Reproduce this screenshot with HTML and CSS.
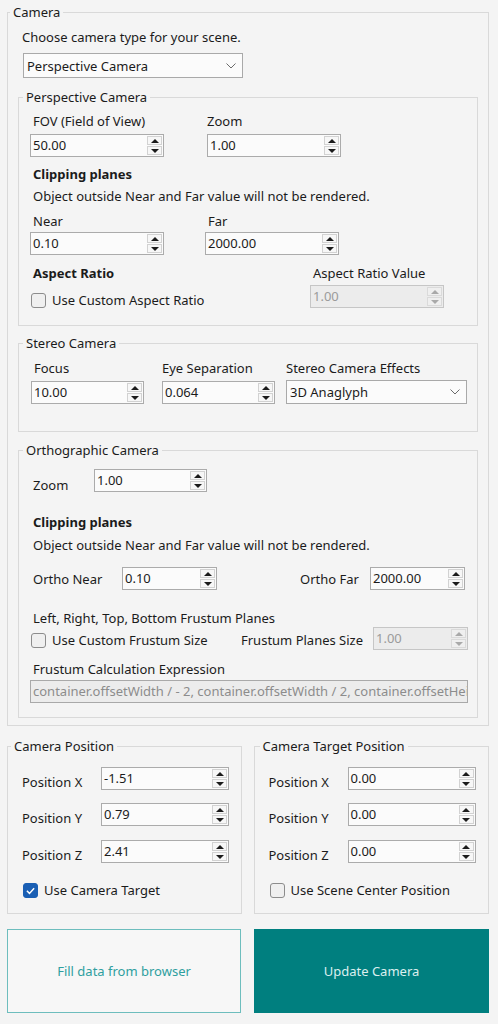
FILE: index.html
```html
<!DOCTYPE html>
<html lang="en">
<head>
    <meta charset="UTF-8">
    <meta name="viewport" content="width=device-width, initial-scale=1.0">
    <title>Camera Settings</title>
    <link rel="stylesheet" href="styles.css">
</head>
<body>
    <div class="page">
        <fieldset class="group camera">
            <legend>Camera</legend>
            <p class="hint">Choose camera type for your scene.</p>
            <div class="select type-select">
                <span>Perspective Camera</span>
                <svg class="chevron" viewBox="0 0 10 6"><polyline points="0.5,0.5 5,5 9.5,0.5"/></svg>
            </div>

            <!-- perspective settings -->
            <fieldset class="group sub perspective">
                <legend>Perspective Camera</legend>
                <div class="row top-row">
                    <div class="field fov">
                        <label>FOV (Field of View)</label>
                        <div class="spin lg"><span class="value">50.00</span><span class="arrows"><span class="arrow up"></span><span class="arrow down"></span></span></div>
                    </div>
                    <div class="field">
                        <label class="tight">Zoom</label>
                        <div class="spin lg"><span class="value">1.00</span><span class="arrows"><span class="arrow up"></span><span class="arrow down"></span></span></div>
                    </div>
                </div>
                <h4 class="title clip-title">Clipping planes</h4>
                <p class="note">Object outside Near and Far value will not be rendered.</p>
                <div class="row near-row">
                    <div class="field near">
                        <label>Near</label>
                        <div class="spin lg"><span class="value">0.10</span><span class="arrows"><span class="arrow up"></span><span class="arrow down"></span></span></div>
                    </div>
                    <div class="field">
                        <label>Far</label>
                        <div class="spin lg"><span class="value">2000.00</span><span class="arrows"><span class="arrow up"></span><span class="arrow down"></span></span></div>
                    </div>
                </div>
                <div class="row aspect-row">
                    <div class="aspect-left">
                        <h4 class="title">Aspect Ratio</h4>
                        <label class="check aspect-check"><span class="box"></span>Use Custom Aspect Ratio</label>
                    </div>
                    <div class="field">
                        <label>Aspect Ratio Value</label>
                        <div class="spin lg disabled"><span class="value">1.00</span><span class="arrows"><span class="arrow up"></span><span class="arrow down"></span></span></div>
                    </div>
                </div>
            </fieldset>

            <!-- stereo settings -->
            <fieldset class="group sub stereo">
                <legend>Stereo Camera</legend>
                <div class="row stereo-row">
                    <div class="field focus">
                        <label>Focus</label>
                        <div class="spin md"><span class="value">10.00</span><span class="arrows"><span class="arrow up"></span><span class="arrow down"></span></span></div>
                    </div>
                    <div class="field eye">
                        <label class="tight">Eye Separation</label>
                        <div class="spin md"><span class="value">0.064</span><span class="arrows"><span class="arrow up"></span><span class="arrow down"></span></span></div>
                    </div>
                    <div class="field">
                        <label class="tight">Stereo Camera Effects</label>
                        <div class="select effect-select">
                            <span>3D Anaglyph</span>
                            <svg class="chevron" viewBox="0 0 10 6"><polyline points="0.5,0.5 5,5 9.5,0.5"/></svg>
                        </div>
                    </div>
                </div>
            </fieldset>

            <!-- orthographic settings -->
            <fieldset class="group sub ortho">
                <legend>Orthographic Camera</legend>
                <div class="row ortho-zoom">
                    <label class="inline zoom-label">Zoom</label>
                    <div class="spin md"><span class="value">1.00</span><span class="arrows"><span class="arrow up"></span><span class="arrow down"></span></span></div>
                </div>
                <h4 class="title ortho-clip">Clipping planes</h4>
                <p class="note ortho-note">Object outside Near and Far value will not be rendered.</p>
                <div class="row ortho-planes">
                    <label class="inline near-label">Ortho Near</label>
                    <div class="spin sm"><span class="value">0.10</span><span class="arrows"><span class="arrow up"></span><span class="arrow down"></span></span></div>
                    <label class="inline far-label">Ortho Far</label>
                    <div class="spin sm"><span class="value">2000.00</span><span class="arrows"><span class="arrow up"></span><span class="arrow down"></span></span></div>
                </div>
                <p class="note frustum-note">Left, Right, Top, Bottom Frustum Planes</p>
                <div class="row frustum-row">
                    <label class="check frustum-check"><span class="box"></span>Use Custom Frustum Size</label>
                    <label class="inline size-label">Frustum Planes Size</label>
                    <div class="spin sm disabled"><span class="value">1.00</span><span class="arrows"><span class="arrow up"></span><span class="arrow down"></span></span></div>
                </div>
                <p class="note expr-note">Frustum Calculation Expression</p>
                <div class="text-input disabled">container.offsetWidth / - 2, container.offsetWidth / 2, container.offsetHeight / 2, container.offsetHeight / - 2</div>
            </fieldset>
        </fieldset>

        <div class="positions">
            <fieldset class="group pos cam-pos">
                <legend>Camera Position</legend>
                <div class="pos-row first">
                    <label class="inline">Position X</label>
                    <div class="spin wide"><span class="value">-1.51</span><span class="arrows"><span class="arrow up"></span><span class="arrow down"></span></span></div>
                </div>
                <div class="pos-row">
                    <label class="inline">Position Y</label>
                    <div class="spin wide"><span class="value">0.79</span><span class="arrows"><span class="arrow up"></span><span class="arrow down"></span></span></div>
                </div>
                <div class="pos-row last">
                    <label class="inline">Position Z</label>
                    <div class="spin wide"><span class="value">2.41</span><span class="arrows"><span class="arrow up"></span><span class="arrow down"></span></span></div>
                </div>
                <label class="check pos-check">
                    <span class="box checked"><svg viewBox="0 0 10 10"><polyline points="2.2,5.2 4.2,7.2 7.8,3.2"/></svg></span>Use Camera Target
                </label>
            </fieldset>

            <fieldset class="group pos target-pos">
                <legend>Camera Target Position</legend>
                <div class="pos-row first">
                    <label class="inline">Position X</label>
                    <div class="spin wide"><span class="value">0.00</span><span class="arrows"><span class="arrow up"></span><span class="arrow down"></span></span></div>
                </div>
                <div class="pos-row">
                    <label class="inline">Position Y</label>
                    <div class="spin wide"><span class="value">0.00</span><span class="arrows"><span class="arrow up"></span><span class="arrow down"></span></span></div>
                </div>
                <div class="pos-row last">
                    <label class="inline">Position Z</label>
                    <div class="spin wide"><span class="value">0.00</span><span class="arrows"><span class="arrow up"></span><span class="arrow down"></span></span></div>
                </div>
                <label class="check pos-check"><span class="box"></span>Use Scene Center Position</label>
            </fieldset>
        </div>

        <div class="actions">
            <button class="btn outline">Fill data from browser</button>
            <button class="btn solid">Update Camera</button>
        </div>
    </div>
</body>
</html>
```

FILE: styles.css
```css
body {
    margin: 0;
    background: #f4f4f4;
    font-family: "Noto Sans", "Open Sans", sans-serif;
    font-size: 13px;
    line-height: 16px;
    color: #1b1b1b;
}

.page {
    padding: 0 9px 0 7px;
}

p, h4 {
    margin: 0;
}

/* group boxes */
fieldset.group {
    margin: 0;
    padding: 0;
    border: 1px solid #d9d9d9;
    min-width: 0;
    box-sizing: border-box;
}

fieldset.group legend {
    padding: 0 3px;
    line-height: 16px;
}

.camera {
    margin-top: 4px !important;
    width: 482px;
    padding: 0 10px 7px !important;
}

.camera > legend {
    margin-left: -8px;
}

.sub {
    width: 460px;
}

.sub > legend {
    margin-left: -7px;
}

.perspective {
    margin-top: 11px !important;
    padding: 0 0 17px 11px !important;
}

.stereo {
    margin-top: 9px !important;
    padding: 0 0 27px 12px !important;
}

.stereo > legend {
    margin-left: -8px;
}

.ortho {
    margin-top: 10px !important;
    padding: 0 0 14px 11px !important;
}

.hint {
    margin: 9px 0 0 4px;
}

/* dropdowns */
.select {
    display: flex;
    align-items: center;
    justify-content: space-between;
    box-sizing: border-box;
    border: 1px solid #a9a9a9;
    background: #fbfbfb;
    padding: 0 6px 0 3px;
}

.type-select {
    margin: 8px 0 0 5px;
    width: 220px;
    height: 25px;
}

.effect-select {
    width: 181px;
    height: 24px;
    margin-top: 4px;
}

.chevron {
    width: 10px;
    height: 6px;
    fill: none;
    stroke: #6b6b6b;
    stroke-width: 1;
}

/* labelled fields */
.row {
    display: flex;
}

.field label {
    display: block;
    padding-left: 3px;
}

.field label.tight {
    padding-left: 0;
}

.title {
    font-weight: 700;
    padding-left: 3px;
}

.note {
    padding-left: 3px;
}

.top-row {
    margin-top: 8px;
}

.top-row .spin {
    margin-top: 5px;
}

.fov {
    width: 177px;
}

.clip-title {
    margin-top: 9px;
}

.clip-title + .note {
    margin-top: 6px;
}

.near-row {
    margin-top: 9px;
}

.near-row .spin {
    margin-top: 3px;
}

.near {
    width: 175px;
}

.aspect-row {
    margin-top: 10px;
}

.aspect-left {
    width: 280px;
}

.aspect-row .spin {
    margin-top: 4px;
}

/* spin boxes */
.spin {
    display: flex;
    height: 23px;
    box-sizing: border-box;
    border: 1px solid #ababab;
    background: #fbfbfb;
}

.spin.lg { width: 134px; }
.spin.md { width: 113px; }
.spin.sm { width: 95px; }
.spin.wide { width: 128px; }

.spin .value {
    flex: 1;
    padding-left: 2px;
    line-height: 20px;
    overflow: hidden;
    white-space: nowrap;
}

.spin .arrows {
    display: flex;
    flex-direction: column;
    gap: 1px;
    width: 15px;
    padding: 1px 1px 1px 0;
}

.arrow {
    flex: 1;
    display: flex;
    align-items: center;
    justify-content: center;
    border: 1px solid #d2d2d2;
    background: #f7f7f7;
}

.arrow::after {
    content: "";
    border-left: 4px solid transparent;
    border-right: 4px solid transparent;
}

.arrow.up::after {
    border-bottom: 4px solid #1b1b1b;
}

.arrow.down::after {
    border-top: 4px solid #1b1b1b;
}

.spin.disabled {
    background: #ececec;
    border-color: #c6c6c6;
    color: #9b9b9b;
}

.spin.disabled .arrow {
    background: #efefef;
    border-color: #dadada;
}

.spin.disabled .arrow.up::after { border-bottom-color: #a9a9a9; }
.spin.disabled .arrow.down::after { border-top-color: #a9a9a9; }

/* checkboxes */
.check {
    display: flex;
    align-items: center;
    gap: 6px;
}

.box {
    width: 15px;
    height: 15px;
    box-sizing: border-box;
    border: 1px solid #8c8c8c;
    border-radius: 3px;
    background: #efefef;
    display: flex;
}

.box.checked {
    background: #1a5fb4;
    border-color: #1a5fb4;
}

.box svg {
    width: 13px;
    height: 13px;
    fill: none;
    stroke: #ffffff;
    stroke-width: 1.1;
}

.aspect-check {
    margin-top: 11px;
    margin-left: 1px;
}

/* stereo */
.stereo-row {
    margin-top: 9px;
}

.stereo-row .spin {
    margin-top: 5px;
}

.focus {
    width: 131px;
}

.eye {
    width: 124px;
}

/* orthographic */
.inline {
    display: block;
    padding-left: 3px;
    box-sizing: border-box;
}

.ortho-zoom {
    margin-top: 11px;
}

.zoom-label {
    width: 64px;
    padding-top: 8px;
}

.ortho-clip {
    margin-top: 21px;
}

.ortho-note {
    margin-top: 7px;
}

.ortho-planes {
    margin-top: 14px;
}

.ortho-planes .inline {
    padding-top: 4px;
}

.near-label {
    width: 92px;
}

.far-label {
    width: 73px;
    margin-left: 80px;
}

.frustum-note {
    margin-top: 20px;
}

.frustum-row {
    margin-top: 1px;
}

.frustum-check {
    width: 207px;
    margin-left: 1px;
    align-self: flex-start;
    margin-top: 5px;
}

.size-label {
    width: 135px;
    padding-top: 5px;
}

.expr-note {
    margin-top: 11px;
}

.text-input {
    margin-top: 3px;
    width: 438px;
    height: 23px;
    box-sizing: border-box;
    border: 1px solid #a9a9a9;
    padding-left: 2px;
    line-height: 21px;
    white-space: nowrap;
    overflow: hidden;
}

.text-input.disabled {
    background: #ececec;
    color: #8c8c8c;
}

/* position groups */
.positions {
    display: flex;
    gap: 12px;
    margin-top: 12px;
}

.pos {
    padding: 0 0 15px 13px !important;
}

.cam-pos {
    width: 235px;
}

.cam-pos > legend {
    margin-left: -10px;
}

.target-pos {
    width: 236px;
}

.target-pos > legend {
    margin-left: -8px;
}

.pos-row {
    display: flex;
    margin-top: 13px;
}

.pos-row .inline {
    width: 80px;
    padding: 7px 0 0 1px;
}

.pos-row.last {
    margin-top: 14px;
}

.pos-check {
    margin-top: 19px;
    margin-left: 2px;
}

/* buttons */
.actions {
    display: flex;
    gap: 13px;
    margin-top: 15px;
}

.btn {
    height: 84px;
    font-family: inherit;
    font-size: 13px;
    cursor: pointer;
}

.btn.outline {
    width: 234px;
    border: 1px solid #6dbdbd;
    background: #f7f7f7;
    color: #2f9f9f;
}

.btn.solid {
    width: 235px;
    border: none;
    background: #007f7f;
    color: #dcefef;
}
```
